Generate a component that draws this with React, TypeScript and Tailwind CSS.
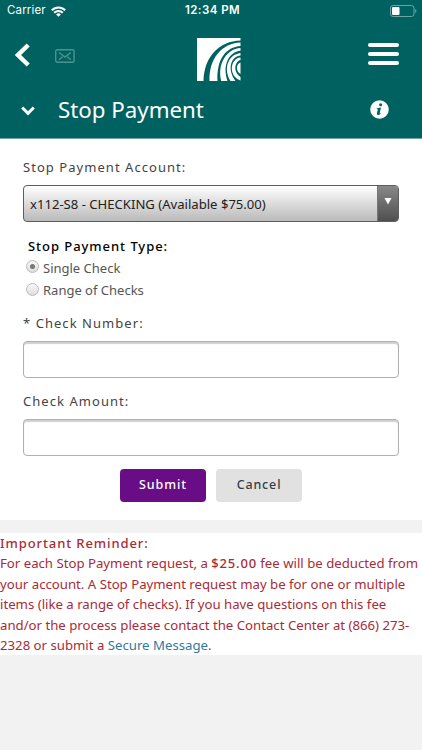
import type { ReactNode } from "react";

function StatusBar() {
  return (
    <div className="flex h-[22px] items-center justify-between pl-[7px] pr-[5px] font-['Inter',sans-serif] text-[11.5px]">
      <div className="flex w-[130px] items-center gap-[5px]">
        <span className="tracking-[0.15px]">Carrier</span>
        <svg width="15" height="11" viewBox="0 0 15 11" fill="none" stroke="currentColor" strokeWidth="2">
          <path d="M.8 4.200a9.400 9.400 0 0 1 13.400 0" />
          <path d="M3.200 6.800a6 6 0 0 1 8.600 0" />
          <path d="M7.500 10.800 5.100 8.400a3.400 3.400 0 0 1 4.800 0z" fill="currentColor" stroke="none" />
        </svg>
      </div>
      <span className="pl-px font-semibold tracking-[0.45px]">12:34 PM</span>
      <div className="flex w-[130px] justify-end">
        <svg width="27" height="12" viewBox="0 0 27 12" fill="none">
          <rect x="0.5" y="0.5" width="23.5" height="11" rx="2.5" stroke="#6ba3a3" />
          <rect x="2" y="2" width="7.5" height="8" rx="1" fill="#fff" />
          <path d="M25.2 4v4c1.6-.6 1.6-3.4 0-4z" fill="#6ba3a3" />
        </svg>
      </div>
    </div>
  );
}

function Logo() {
  return (
    <svg width="44" height="43" viewBox="0 0 44 43" fill="#fff">
      <path d="M0 0h43.500v2.500C22 3 7 19 6.500 43H0z" />
      <path d="M43.500 4.500V8C29 9 19.500 21 20.500 43h-8C12 21 24 5.500 43.500 4.500z" />
      <path d="M43.500 10v2.800C32 14 25 27 30.500 43h-6.300C20 25 30 11 43.500 10z" />
      <path d="M43.500 15v2.500C35 18 29 30 38.500 43h-5C26 31 31 16.500 43.500 15z" />
      <path d="M43.500 19.500V22c-5 1-8.500 11 0 17v3.500C31 38 33 20.500 43.500 19.500z" />
      <path d="M43.500 24.500v11.500c-5-3-4.500-10 0-11.500z" />
    </svg>
  );
}

function Header() {
  return (
    <header className="h-[139px] border-b border-[#6da5a4] bg-[#006260] text-white">
      <StatusBar />
      <div className="flex h-[64px] items-start pl-[15px] pr-[23px] pt-[16px]">
        <svg width="16" height="34" viewBox="0 0 16 34" fill="none" stroke="#fff" strokeWidth="4.400">
          <path d="M13.200 7 3 17l10.200 10" />
        </svg>
        <svg className="ml-[24px] mt-[11px]" width="20" height="14" viewBox="0 0 20 14" fill="none" stroke="#4d9291" strokeWidth="1.400">
          <rect x="0.700" y="0.700" width="18.400" height="12.600" rx="1.500" />
          <path d="m4 3.500 5.900 4.500 5.900-4.500M4 10.800l3.500-3M15.800 10.800l-3.500-3" />
        </svg>
        <div className="ml-[122px]">
          <Logo />
        </div>
        <div className="ml-auto mt-[5px] flex flex-col gap-[5px]">
          <span className="h-1 w-[31px] rounded-full bg-white" />
          <span className="h-1 w-[31px] rounded-full bg-white" />
          <span className="h-1 w-[31px] rounded-full bg-white" />
        </div>
      </div>
      <div className="flex h-[48px] items-center pl-[21px] pr-[33px]">
        <svg className="mt-[2px]" width="14" height="10" viewBox="0 0 14 10" fill="none" stroke="#fff" strokeWidth="3">
          <path d="m1.200 1.500 5.800 5.800 5.800-5.800" />
        </svg>
        <h1 className="ml-[23px] text-[22.300px] leading-[30px]">Stop Payment</h1>
        <svg className="-mt-px ml-auto" width="19" height="19" viewBox="0 0 19 19">
          <circle cx="9.500" cy="9.500" r="9.300" fill="#fff" />
          <circle cx="10.600" cy="4.700" r="1.500" fill="#006260" />
          <path d="M7 8.300 11 7.500 9.700 13q-.2 1 1.500-.3-1.300 2.300-3 2.200-1.700-.1-1.200-2l.8-3.200q.2-.9-1.200-.8z" fill="#006260" />
        </svg>
      </div>
    </header>
  );
}

function Label({ children }: { children: ReactNode }) {
  return <div className="text-[13px] leading-[20px] tracking-[1.050px] text-[#444]">{children}</div>;
}

function Radio({ label, checked }: { label: string; checked?: boolean }) {
  return (
    <div className="flex h-[22.500px] items-center gap-1">
      <span className="-mt-[3px] flex size-[13px] items-center justify-center rounded-full border border-[#bbb] bg-linear-to-b from-[#f8f8f8] to-[#ddd]">
        {checked && <span className="size-[5px] rounded-full bg-[#777]" />}
      </span>
      <span className="text-[13px] text-[#555]">{label}</span>
    </div>
  );
}

function TextField() {
  return (
    <input className="block h-[37px] w-full rounded-[4px] border border-[#b0b0b0] bg-white px-2 shadow-[inset_0_2px_1px_#d0d0d0] outline-none" />
  );
}

export default function App() {
  return (
    <main className="h-[750px] w-[422px] overflow-hidden bg-[#f2f2f2] font-['Noto_Sans',sans-serif]">
      <Header />

      <form className="h-[381px] bg-white px-[23px] pt-[18px]">
        <Label>Stop Payment Account:</Label>
        <div className="mt-2 flex h-[37px] w-full overflow-hidden rounded-[4px] border border-[#5d5d5d] bg-linear-to-b from-white to-[#bababa]">
          <span className="flex-1 pl-[6px] text-[13.100px] leading-[36px] text-[#222]">x112-S8 - CHECKING (Available $75.00)</span>
          <span className="flex w-[21px] justify-center border-l border-[#777] bg-linear-to-b from-[#888] to-[#505050] pr-px pt-[12px]">
            <svg width="8" height="7" viewBox="0 0 8 7" fill="#fff">
              <path d="M0.500 0h7L4 6.500z" />
            </svg>
          </span>
        </div>

        <div className="mt-[14px] pl-[5px] text-[13px] font-medium leading-[20px] tracking-[0.950px] text-black">
          Stop Payment Type:
        </div>
        <div className="mt-[1px] pl-[3px]">
          <Radio label="Single Check" checked />
          <Radio label="Range of Checks" />
        </div>

        <div className="mt-[11px]">
          <Label>* Check Number:</Label>
        </div>
        <div className="mt-2">
          <TextField />
        </div>
        <div className="mt-[13px]">
          <Label>Check Amount:</Label>
        </div>
        <div className="mt-2">
          <TextField />
        </div>

        <div className="mt-[13px] flex justify-center gap-[10px]">
          <button type="button" className="h-[33px] w-[86px] rounded-[4px] bg-[#690d86] text-[12.500px] font-medium tracking-[0.950px] text-white">
            Submit
          </button>
          <button type="button" className="h-[33px] w-[86px] rounded-[4px] bg-[#e1e1e1] text-[12.500px] font-medium tracking-[0.850px] text-[#333f4a]">
            Cancel
          </button>
        </div>
      </form>

      <section className="mt-[13px] h-[122px] whitespace-nowrap bg-white text-[13.200px] leading-[20.400px] text-[#a92b36]">
        <p className="text-[13px] font-medium leading-[20.400px] tracking-[0.900px]">Important Reminder:</p>
        <p>
          For each Stop Payment request, a <span className="text-[13px] font-medium tracking-[0.800px]">$25.00</span> fee will be deducted from
          <br />
          your account. A Stop Payment request may be for one or multiple
          <br />
          items (like a range of checks). If you have questions on this fee
          <br />
          and/or the process please contact the Contact Center at (866) 273-
          <br />
          2328 or submit a <a className="text-[#35799c]">Secure Message</a>.
        </p>
      </section>
    </main>
  );
}
